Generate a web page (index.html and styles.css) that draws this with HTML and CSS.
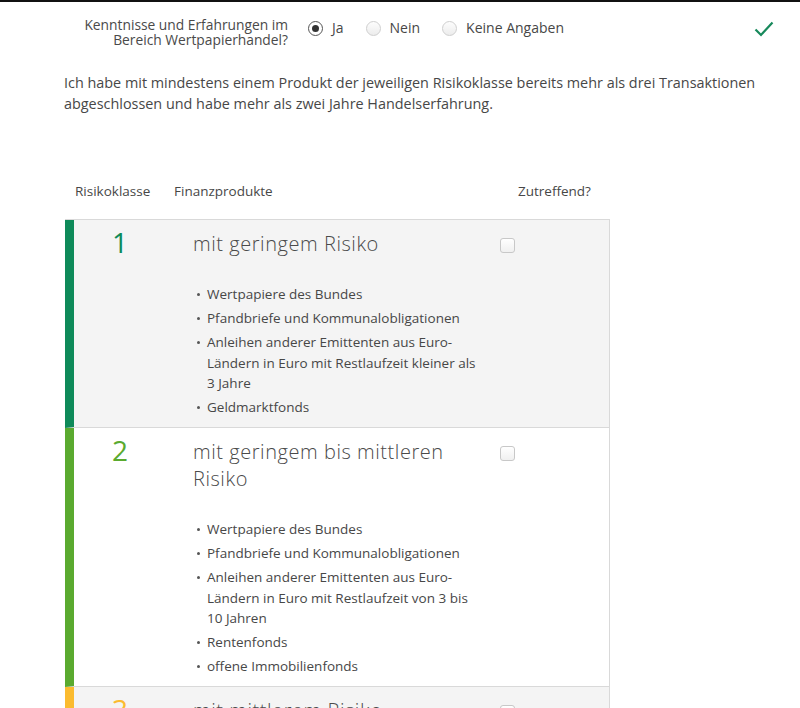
FILE: index.html
```html
<!DOCTYPE html>
<html lang="de">
<head>
<meta charset="utf-8">
<title>Risikoklassen</title>
<link rel="stylesheet" href="styles.css">
</head>
<body>
<div class="topline"></div>
<main class="page">
  <div class="question">
    <div class="q-label"><span class="q-line">Kenntnisse und Erfahrungen im</span><span class="q-line">Bereich Wertpapierhandel?</span></div>
    <div class="q-options">
      <label class="opt"><span class="radio checked"></span>Ja</label>
      <label class="opt"><span class="radio"></span>Nein</label>
      <label class="opt"><span class="radio"></span>Keine Angaben</label>
    </div>
    <svg class="ok" width="20" height="16" viewBox="0 0 20 16"><path d="M1.5 8.5 L7 14 L18.5 1.5" fill="none" stroke="#17895b" stroke-width="2.2"/></svg>
  </div>

  <p class="intro">Ich habe mit mindestens einem Produkt der jeweiligen Risikoklasse bereits mehr als drei Transaktionen abgeschlossen und habe mehr als zwei Jahre Handelserfahrung.</p>

  <div class="table">
    <div class="thead">
      <span class="th-risk">Risikoklasse</span>
      <span class="th-prod">Finanzprodukte</span>
      <span class="th-ok">Zutreffend?</span>
    </div>
    <div class="rows">
      <div class="row grey c1">
        <div class="num">1</div>
        <div class="content">
          <div class="title">mit geringem Risiko</div>
          <ul class="list">
            <li>Wertpapiere des Bundes</li>
            <li>Pfandbriefe und Kommunalobligationen</li>
            <li>Anleihen anderer Emittenten aus Euro-Ländern in Euro mit Restlaufzeit kleiner als 3 Jahre</li>
            <li>Geldmarktfonds</li>
          </ul>
        </div>
        <div class="check"><span class="box"></span></div>
      </div>
      <div class="row c2">
        <div class="num">2</div>
        <div class="content">
          <div class="title">mit geringem bis mittleren Risiko</div>
          <ul class="list">
            <li>Wertpapiere des Bundes</li>
            <li>Pfandbriefe und Kommunalobligationen</li>
            <li>Anleihen anderer Emittenten aus Euro-Ländern in Euro mit Restlaufzeit von 3 bis 10 Jahren</li>
            <li>Rentenfonds</li>
            <li>offene Immobilienfonds</li>
          </ul>
        </div>
        <div class="check"><span class="box"></span></div>
      </div>
      <div class="row grey c3">
        <div class="num">3</div>
        <div class="content">
          <div class="title">mit mittlerem Risiko</div>
        </div>
        <div class="check"><span class="box"></span></div>
      </div>
    </div>
  </div>
</main>
</body>
</html>
```

FILE: styles.css
```css
html, body {
  margin: 0;
  padding: 0;
  background: #fff;
  overflow: hidden;
}
body {
  font-family: "Open Sans", "Liberation Sans", sans-serif;
  color: #474747;
  font-size: 13.5px;
}
.topline {
  height: 2px;
  background: #111;
}
.page {
  padding: 0 0 0 64px;
}
.question {
  display: flex;
  align-items: flex-start;
  height: 52px;
  padding-top: 15px;
  box-sizing: border-box;
}
.q-label {
  width: 224px;
  display: flex;
  flex-direction: column;
  align-items: flex-end;
  font-size: 13.8px;
  color: #4a4a4a;
}
.q-line {
  display: block;
  height: 15px;
  line-height: 15px;
  white-space: nowrap;
}
.q-options {
  display: flex;
  margin-left: 20px;
  font-size: 14px;
  line-height: 22px;
}
.opt {
  display: flex;
  align-items: center;
  gap: 9px;
  margin-right: 22px;
}
.radio {
  width: 13px;
  height: 13px;
  border-radius: 50%;
  border: 1px solid #cfcfcf;
  background: linear-gradient(#fdfdfd, #ececec);
  position: relative;
}
.radio.checked {
  border-color: #555;
  background: #fff;
}
.radio.checked::after {
  content: "";
  position: absolute;
  left: 3px;
  top: 3px;
  width: 7px;
  height: 7px;
  border-radius: 50%;
  background: #333;
}
.ok {
  margin-left: auto;
  margin-right: 26px;
  margin-top: 4px;
}
.intro {
  margin: 18px 0 0;
  width: 720px;
  font-size: 14.4px;
  line-height: 21px;
}
.table {
  margin-top: 68px;
  width: 545px;
  margin-left: 1px;
}
.thead {
  display: flex;
  height: 37px;
  line-height: 18px;
  padding-top: 0;
  box-sizing: border-box;
}
.th-risk { margin-left: 10px; width: 99px; }
.th-prod { width: 344px; }
.rows {
  border-top: 1px solid #d9d9d9;
  border-right: 1px solid #d9d9d9;
}
.row {
  display: grid;
  grid-template-columns: 92px 289px 1fr;
  column-gap: 27px;
  border-left: 9px solid #0e8a59;
  border-bottom: 1px solid #d9d9d9;
  padding: 10px 0 9.5px;
  background: #fff;
}
.row.grey { background: #f4f4f4; }
.row.c1 { border-left-color: #0e8a59; }
.row.c2 { border-left-color: #5aaa2f; }
.row.c3 { border-left-color: #fbbb2f; }
.num {
  text-align: center;
  font-size: 28px;
  line-height: 24px;
  padding-top: 0;
  font-weight: 400;
}
.c1 .num { color: #0e8a59; }
.c2 .num { color: #5aaa2f; }
.c3 .num { color: #fbbb2f; }
.title {
  font-size: 20px;
  line-height: 27px;
  letter-spacing: 0.55px;
  color: #4a4a4a;
  font-weight: 300;
}
.list {
  list-style: none;
  margin: 27px 0 0;
  padding: 0 0 0 14px;
}
.list li {
  position: relative;
  line-height: 20.5px;
  margin-bottom: 3.5px;
}
.list li:last-child { margin-bottom: 0; }
.list li::before {
  content: "";
  position: absolute;
  left: -10px;
  top: 9px;
  width: 3px;
  height: 3px;
  border-radius: 50%;
  background: #555;
}
.check {
  margin-left: -9px;
  padding-top: 8px;
}
.box {
  display: block;
  width: 13px;
  height: 13px;
  border: 1px solid #c8c8c8;
  border-radius: 3px;
  background: linear-gradient(#ffffff, #f0f0f0);
}
```
